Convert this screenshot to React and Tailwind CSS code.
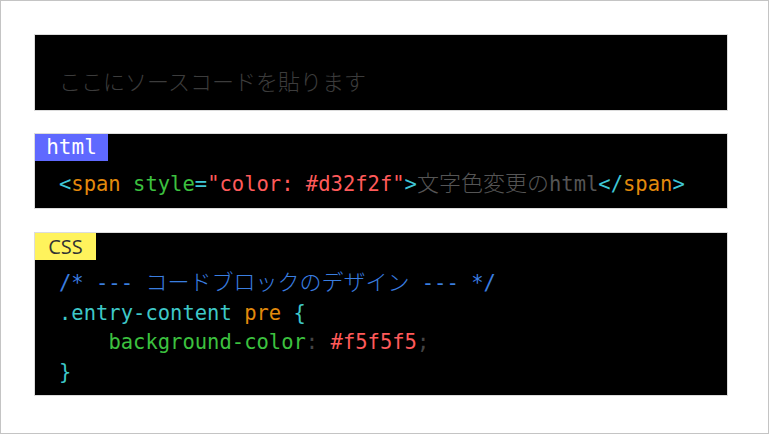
export default function App() {
  const mono = { fontFamily: '"DejaVu Sans Mono", "Noto Sans CJK JP", monospace' };
  const jp = "font-['Noto_Sans_CJK_JP',sans-serif] text-[22px]";
  return (
    <div className="w-[770px] h-[434px] bg-white">
      <div className="w-[769px] h-[434px] border border-[#c4c4c4] pt-[33px] pl-[33px] flex flex-col">
        {/* block 1 */}
        <div className="w-[694px] h-[77px] border border-[#dcdcdc] bg-black pt-[31px] pl-[24px]">
          <div className={`${jp} leading-[29px] text-[#3c3c3c] font-light`}>ここにソースコードを貼ります</div>
        </div>
        {/* block 2 */}
        <div className="mt-[22px] w-[694px] h-[76px] border border-[#dcdcdc] bg-black flex flex-col">
          <div className="self-start h-[27px] w-[73px] bg-[#5f69ff] text-white text-[21px] leading-[27px] text-center" style={mono}>html</div>
          <div className="pl-[24px] pt-[6px] text-[20.5px] leading-[29px] whitespace-pre" style={mono}>
            <span className="text-[#3fc7d6]">&lt;</span>
            <span className="text-[#e38a0c]">span</span>
            <span> </span>
            <span className="text-[#3cc13f]">style</span>
            <span className="text-[#3fc7d6]">=</span>
            <span className="text-[#ff5a5a]">"color: #d32f2f"</span>
            <span className="text-[#3fc7d6]">&gt;</span>
            <span className={`${jp} text-[#555555] font-light`}>文字色変更の</span>
            <span className="text-[#555555]">html</span>
            <span className="text-[#3fc7d6]">&lt;/</span>
            <span className="text-[#e38a0c]">span</span>
            <span className="text-[#3fc7d6]">&gt;</span>
          </div>
        </div>
        {/* block 3 */}
        <div className="mt-[23px] w-[694px] h-[164px] border border-[#dcdcdc] bg-black flex flex-col">
          <div className="self-start h-[27px] w-[61px] bg-[#fff35c] text-[#333333] text-[20px] leading-[27px] text-center font-['Open_Sans',sans-serif]">CSS</div>
          <div className="pl-[24px] pt-[6px] text-[20.5px] leading-[29.5px] whitespace-pre" style={mono}>
            <div className="text-[#3a7ee0]">
              <span>/* --- </span>
              <span className={`${jp} font-light`}>コードブロックのデザイン</span>
              <span> --- */</span>
            </div>
            <div>
              <span className="text-[#3ec8c8]">.entry-content</span>
              <span> </span>
              <span className="text-[#e38a0c]">pre</span>
              <span> </span>
              <span className="text-[#3ec8c8]">{"{"}</span>
            </div>
            <div>
              <span>    </span>
              <span className="text-[#3cc13f]">background-color</span>
              <span className="text-[#444444]">: </span>
              <span className="text-[#ff5a5a]">#f5f5f5</span>
              <span className="text-[#444444]">;</span>
            </div>
            <div className="text-[#3ec8c8]">{"}"}</div>
          </div>
        </div>
      </div>
    </div>
  );
}
